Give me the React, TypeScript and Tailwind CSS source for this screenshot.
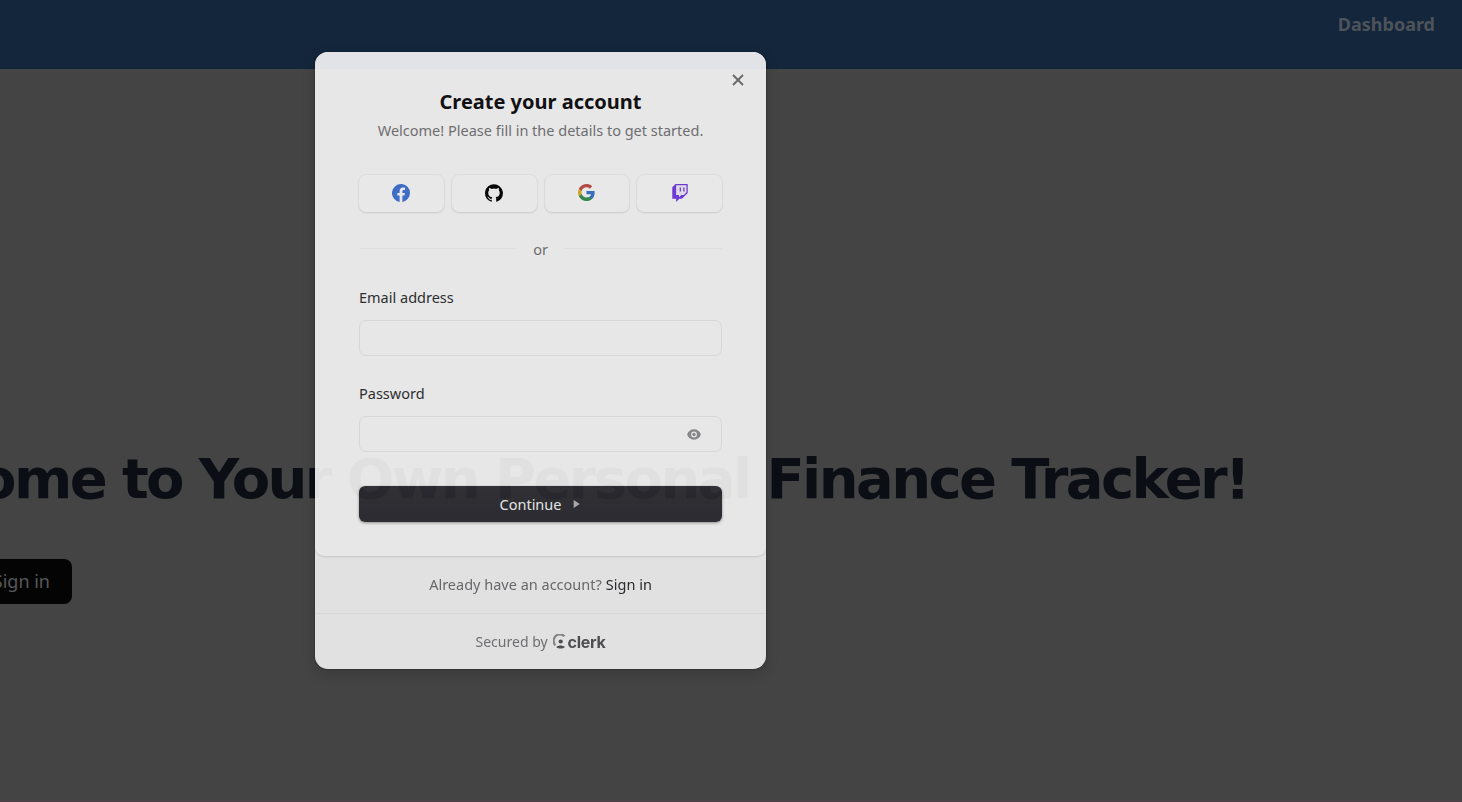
import React from "react";

const FONT = "[font-family:'Noto_Sans',sans-serif]";

function FacebookIcon() {
  return (
    <svg className="size-[18px]" viewBox="0 0 24 24">
      <path
        fill="#3f72d6"
        d="M24 12a12 12 0 1 0-13.875 11.854V15.47H7.078V12h3.047V9.356c0-3.007 1.792-4.668 4.533-4.668 1.312 0 2.686.234 2.686.234v2.953H15.83c-1.491 0-1.956.925-1.956 1.874V12h3.328l-.532 3.47h-2.796v8.384A12 12 0 0 0 24 12z"
      />
    </svg>
  );
}

function GithubIcon() {
  return (
    <svg className="size-[18px]" viewBox="0 0 24 24">
      <path
        fill="#000"
        d="M12 .3a12 12 0 0 0-3.8 23.38c.6.12.83-.26.83-.57L9 21.07c-3.34.72-4.04-1.61-4.04-1.61-.55-1.39-1.34-1.76-1.34-1.76-1.08-.74.09-.73.09-.73 1.2.09 1.83 1.24 1.83 1.24 1.08 1.83 2.81 1.3 3.5 1 .1-.78.42-1.31.76-1.61-2.67-.3-5.47-1.33-5.47-5.93 0-1.31.47-2.38 1.24-3.22-.14-.3-.54-1.52.1-3.18 0 0 1-.32 3.3 1.23a11.5 11.5 0 0 1 6 0c2.28-1.55 3.29-1.23 3.29-1.23.64 1.66.24 2.88.12 3.18a4.65 4.65 0 0 1 1.23 3.22c0 4.61-2.8 5.63-5.48 5.92.42.36.81 1.1.81 2.22l-.01 3.29c0 .31.2.69.82.57A12 12 0 0 0 12 .3"
      />
    </svg>
  );
}

function GoogleIcon() {
  return (
    <svg className="size-[17px]" viewBox="0 0 24 24">
      <path fill="#3b73d1" d="M23.5 12.27c0-.85-.08-1.67-.22-2.45H12v4.63h6.45a5.52 5.52 0 0 1-2.4 3.62v3h3.88c2.27-2.09 3.57-5.17 3.57-8.8z" />
      <path fill="#328f4c" d="M12 24c3.24 0 5.96-1.07 7.94-2.91l-3.88-3.01c-1.07.72-2.45 1.15-4.06 1.15-3.13 0-5.78-2.11-6.72-4.96H1.27v3.11A12 12 0 0 0 12 24z" />
      <path fill="#dfb52c" d="M5.28 14.27a7.2 7.2 0 0 1 0-4.56V6.6H1.27a12 12 0 0 0 0 10.78z" />
      <path fill="#c24c42" d="M12 4.75c1.76 0 3.35.6 4.6 1.8l3.44-3.45A12 12 0 0 0 1.27 6.6l4.01 3.11C6.22 6.86 8.87 4.75 12 4.75z" />
    </svg>
  );
}

function TwitchIcon() {
  return (
    <svg className="h-[18px] w-[18px]" viewBox="0 0 24 24">
      <path fill="#f4f1fa" d="M7 1.700h13.800v9.600L17 15.400h-3.800L9.700 18.800v-3.400H7z" />
      <path
        fill="#7638ea"
        d="M6 0 1.700 4.300v15.400h5.150V24l4.300-4.300h3.430L22.300 12V0zm14.570 11.140-3.430 3.430h-3.430l-3 3v-3H6.860V1.710h13.710zM18 4.710h-1.710v5.150H18zm-4.710 0h-1.720v5.150h1.720z"
      />
    </svg>
  );
}

function ClerkMark() {
  return (
    <svg className="h-[15px] w-[13px] shrink-0" viewBox="0 0 13 15">
      <path d="M11.500 2.300A6 6 0 0 0 2.400 11.200" fill="none" stroke="#909093" strokeWidth="2.300" />
      <circle cx="7.700" cy="7.500" r="2.100" fill="#505054" />
      <path d="M3.200 13c2.600-2 6.200-2 8.800 0-2.500 2.100-6.300 2.100-8.800 0z" fill="#505054" />
    </svg>
  );
}

function SocialButton({ children }: { children: React.ReactNode }) {
  return (
    <button className="flex h-[37px] flex-1 items-center justify-center rounded-[7px] bg-white pb-[2px] shadow-[0_0_0_1px_rgba(0,0,0,0.035),0_1px_2px_rgba(0,0,0,0.1)]">
      {children}
    </button>
  );
}

function SignUpModal() {
  return (
    <div className="flex h-[617px] w-[451px] flex-col overflow-hidden rounded-[13px] bg-[#f7f7f8] opacity-[0.88]">
      <div className="flex h-[504px] shrink-0 flex-col rounded-b-[9px] bg-[#fefefe] px-11 shadow-[0_1px_2px_rgba(0,0,0,0.12)]">
        <div className="-mr-[22px] flex h-[34px] items-end justify-end">
          <svg className="size-3" viewBox="0 0 12 12" fill="none" stroke="#6c6c70" strokeWidth="1.800">
            <path d="M1 1l10 10M11 1L1 11" />
          </svg>
        </div>
        <h2 className="mt-[2px] text-center text-[20px] leading-[27px] font-bold whitespace-nowrap text-[#0b0b0d]">
          <span>Create your account</span>
        </h2>
        <p className="mt-[5px] text-center text-[14.500px] leading-[20px] whitespace-nowrap text-[#757578]">
          <span>Welcome! Please fill in the details to get started.</span>
        </p>
        <div className="mt-[35px] flex gap-2">
          <SocialButton><FacebookIcon /></SocialButton>
          <SocialButton><GithubIcon /></SocialButton>
          <SocialButton><GoogleIcon /></SocialButton>
          <SocialButton><TwitchIcon /></SocialButton>
        </div>
        <div className="mt-[28px] flex h-5 items-center text-[14.500px] text-[#757578]">
          <div className="mb-[3px] h-px flex-1 bg-[#f5f5f6]" />
          <span className="px-4">or</span>
          <div className="mb-[3px] h-px flex-1 bg-[#f5f5f6]" />
        </div>
        <label className="mt-[27px] text-[14.500px] leading-[20px] text-[#2c2c30]">
          <span>Email address</span>
        </label>
        <div className="mt-[13px] h-9 shrink-0 rounded-[7px] border border-[#ececed]" />
        <label className="mt-[27px] text-[14.500px] leading-[20px] text-[#2c2c30]">
          <span>Password</span>
        </label>
        <div className="mt-[13px] flex h-9 shrink-0 items-center justify-end rounded-[7px] border border-[#ececed] pr-5">
          <svg className="h-[11px] w-[14px]" viewBox="0 0 14 11">
            <path fill="#919194" fillRule="evenodd" d="M7 .3c3.300 0 5.800 2 6.900 5.200C12.800 8.700 10.300 10.700 7 10.700S1.200 8.700.1 5.500C1.200 2.300 3.700.3 7 .3zm0 2.300a2.900 2.900 0 1 0 0 5.800 2.900 2.900 0 0 0 0-5.800z" />
            <circle cx="7" cy="5.500" r="1.700" fill="#919194" />
          </svg>
        </div>
        <button className="mt-[34px] flex h-9 shrink-0 items-center justify-center rounded-[6px] bg-gradient-to-b from-[#2e2e34] to-[#29292f] pr-[1px] text-[14.500px] text-[#fafafa] shadow-[0_1px_3px_rgba(0,0,0,0.4)]">
          <span className="leading-5">Continue</span>
          <svg className="ml-3 h-2 w-[7px]" viewBox="0 0 7 8">
            <path d="M.7 0 6.700 4 .7 8z" fill="#b8b8bb" />
          </svg>
        </button>
      </div>
      <div className="flex h-[58px] shrink-0 items-center justify-center gap-1 border-b border-[#ececed] text-[14.500px] whitespace-nowrap">
        <span className="text-[#6e6e71]">Already have an account?</span>
        <a className="text-[#28282b]">Sign in</a>
      </div>
      <div className="flex flex-1 items-center justify-center text-[14px] whitespace-nowrap text-[#757578]">
        <span>Secured by</span>
        <span className="ml-[5px] flex items-center gap-[2px] text-[#505054]">
          <ClerkMark />
          <span className="[font-family:Inter,sans-serif] text-[16px] leading-none font-bold tracking-[-0.3px]">clerk</span>
        </span>
      </div>
    </div>
  );
}

export default function App() {
  return (
    <div className={`relative h-[802px] w-full overflow-hidden bg-[#444444] ${FONT}`}>
      <header className="flex h-[69px] items-start justify-end bg-[#14263b] pt-[12px] pr-[27px] text-[18px] leading-[24px] font-bold text-[#4d535a]">
        <a>Dashboard</a>
      </header>
      <main className="pt-[376px]">
        <h1 className="flex justify-end pr-[214px] [font-family:'DejaVu_Sans',sans-serif] text-[56px] leading-[68px] font-bold tracking-[-2.600px] whitespace-nowrap text-[#0b0e14]">
          <span>Welcome to Your Own Personal Finance Tracker!</span>
        </h1>
        <div className="mt-[46px] -ml-6 flex h-[45px] w-24 items-center justify-end rounded-[8px] bg-[#040404] pr-[22px] text-[18px] whitespace-nowrap text-[#58585a]">
          <span>Sign in</span>
        </div>
      </main>
      <div className="absolute top-[52px] left-[315px] rounded-[13px] shadow-[0_5px_14px_rgba(0,0,0,0.16),0_0_2px_rgba(0,0,0,0.4)]">
        <SignUpModal />
      </div>
      <div className="absolute bottom-0 left-0 h-px w-full bg-[#4c3b42]" />
    </div>
  );
}
